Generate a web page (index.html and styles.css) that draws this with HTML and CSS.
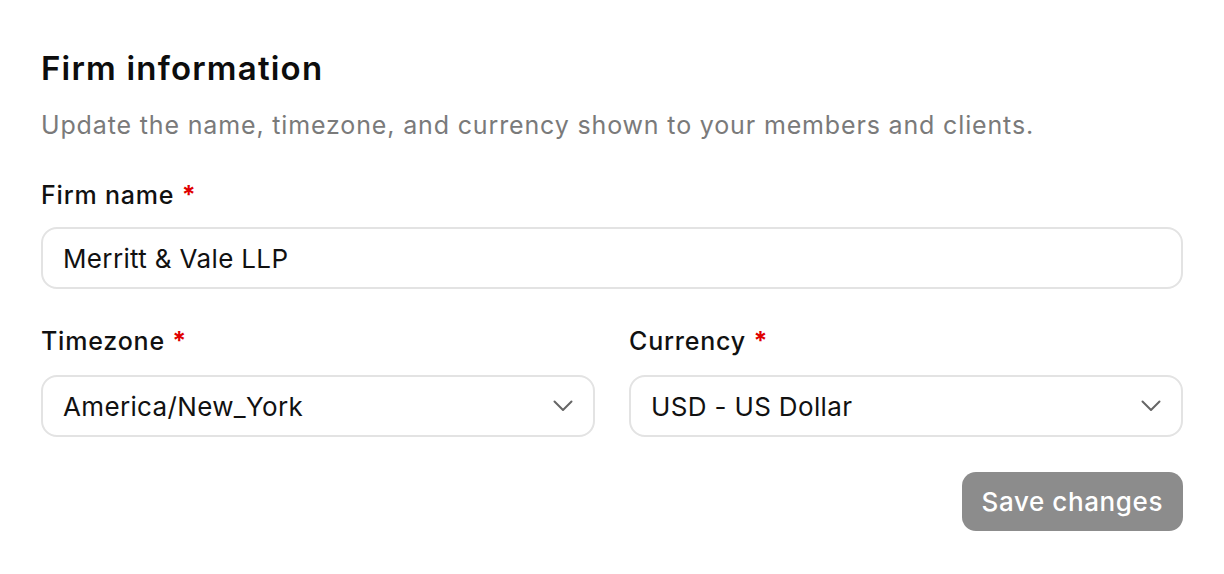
FILE: index.html
```html
<!DOCTYPE html>
<html lang="en">
<head>
<meta charset="utf-8">
<title>Firm information</title>
<link rel="stylesheet" href="styles.css">
</head>
<body>
<form class="card">
  <h1 class="title">Firm information</h1>
  <p class="subtitle">Update the name, timezone, and currency shown to your members and clients.</p>

  <div class="field field-full">
    <label class="label">Firm name <span class="req">*</span></label>
    <div class="control">Merritt &amp; Vale LLP</div>
  </div>

  <div class="row">
    <div class="field">
      <label class="label">Timezone <span class="req">*</span></label>
      <div class="control select">
        <span>America/New_York</span>
        <svg class="chev" width="20" height="12" viewBox="0 0 20 12"><path d="M1.5 1.5 L10 10 L18.5 1.5" fill="none" stroke="#666" stroke-width="2" stroke-linecap="round" stroke-linejoin="round"/></svg>
      </div>
    </div>
    <div class="field">
      <label class="label">Currency <span class="req">*</span></label>
      <div class="control select">
        <span>USD - US Dollar</span>
        <svg class="chev" width="20" height="12" viewBox="0 0 20 12"><path d="M1.5 1.5 L10 10 L18.5 1.5" fill="none" stroke="#666" stroke-width="2" stroke-linecap="round" stroke-linejoin="round"/></svg>
      </div>
    </div>
  </div>

  <div class="actions">
    <button type="button" class="btn">Save changes</button>
  </div>
</form>
</body>
</html>
```

FILE: styles.css
```css
html, body {
  margin: 0;
  background: #ffffff;
}
body {
  font-family: Inter, "Noto Sans", "Liberation Sans", sans-serif;
  color: #111111;
}
.card {
  padding: 48px 41px 40px 41px;
  width: 1142px;
}
.title {
  margin: 0;
  font-size: 33px;
  line-height: 40px;
  font-weight: 600;
  letter-spacing: 1.2px;
  color: #0d0d0d;
}
.subtitle {
  margin: 20px 0 0 0;
  font-size: 25px;
  line-height: 34px;
  letter-spacing: 0.85px;
  color: #7a7a7a;
}
.field {
  display: flex;
  flex-direction: column;
}
.field-full {
  margin-top: 37px;
}
.label {
  font-size: 25px;
  line-height: 32px;
  font-weight: 500;
  letter-spacing: 0.8px;
  color: #111111;
  margin-bottom: 16px;
}
.req {
  color: #e00000;
  font-weight: 700;
}
.control {
  box-sizing: border-box;
  height: 62px;
  border: 2px solid #e3e3e3;
  border-radius: 16px;
  padding: 0 20px;
  display: flex;
  align-items: center;
  font-size: 26px;
  letter-spacing: 0.35px;
  color: #111111;
}
.select {
  justify-content: space-between;
}
.row {
  margin-top: 36px;
  display: grid;
  grid-template-columns: 1fr 1fr;
  gap: 34px;
}
.row .label {
  margin-bottom: 18px;
}
.actions {
  margin-top: 35px;
  display: flex;
  justify-content: flex-end;
}
.btn {
  font-family: inherit;
  height: 59px;
  padding: 0 20px;
  border: none;
  border-radius: 14px;
  background: #8c8c8c;
  color: #ffffff;
  font-size: 26px;
  font-weight: 500;
  letter-spacing: 0.6px;
}
```
